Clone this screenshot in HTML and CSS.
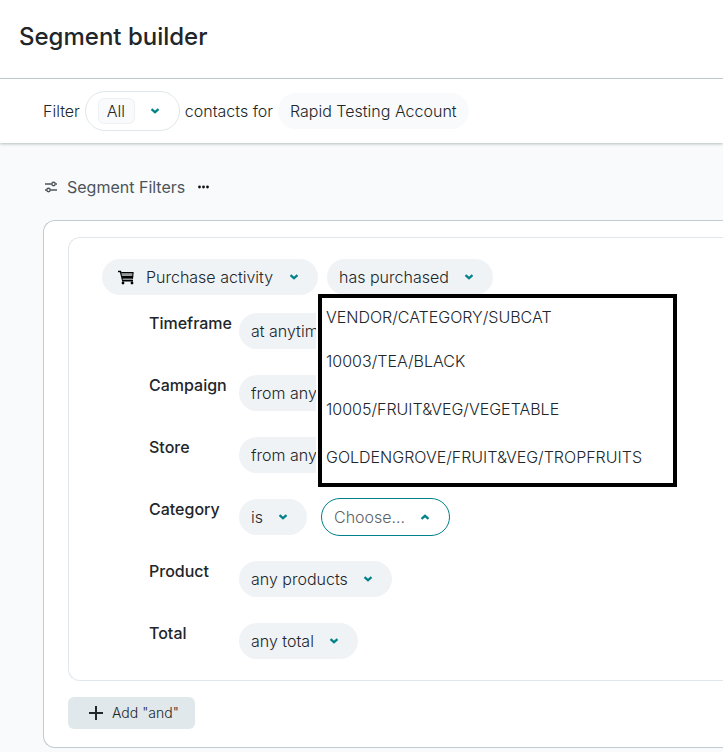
FILE: index.html
```html
<!DOCTYPE html>
<html lang="en">
<head>
<meta charset="utf-8">
<title>Segment builder</title>
<link rel="stylesheet" href="styles.css">
</head>
<body>
<svg class="sprite" aria-hidden="true">
  <symbol id="chevron" viewBox="0 0 10 6"><path d="M1.500 1.200 5 4.200 8.500 1.200" fill="none" stroke="currentColor" stroke-width="2.200"/></symbol>
</svg>
<header class="page-header">
  <h1>Segment builder</h1>
</header>
<form class="filter-bar">
  <label for="match">Filter</label>
  <span class="pill pill-outline">
    <select id="match" class="tag"><option>All</option></select>
    <svg class="chevron"><use href="#chevron"/></svg>
  </span>
  <span>contacts for</span>
  <span class="account">Rapid Testing Account</span>
</form>
<main>
  <div class="toolbar">
    <svg class="icon-sliders" viewBox="0 0 14 12" fill="none" stroke="currentColor" stroke-width="1.400"><path d="M1 3h6.500M11.500 3H13M1 9h1.500M6.500 9H13"/><circle cx="9.500" cy="3" r="1.700"/><circle cx="4.500" cy="9" r="1.700"/></svg>
    <h2>Segment Filters</h2>
    <button type="button" class="more" aria-label="More options"><svg viewBox="0 0 12 4" fill="currentColor"><circle cx="2" cy="2" r="1.400"/><circle cx="6" cy="2" r="1.400"/><circle cx="10" cy="2" r="1.400"/></svg></button>
  </div>
  <section class="panel">
    <div class="card">
      <div class="condition">
        <span class="pill pill-icon">
          <svg class="icon-cart" viewBox="0 0 17 15"><path d="M0 1.500h2.500l2.300 9.300H15" fill="none" stroke="currentColor" stroke-width="1.500"/><path d="M3.200 2H15.500V3.500H3.600zM3.900 5.700H15.300L14.900 8.800H4.700z" fill="currentColor"/><path d="M3.600 4.600H15.300" stroke="#8f9598" stroke-width="2"/><path d="M4.600 9.400H14.800" stroke="#8f9598" stroke-width="1.200"/><path d="M15 2.600 14.500 8.800" stroke="currentColor" stroke-width="1"/><circle cx="5" cy="13" r="1.400" fill="currentColor"/><circle cx="14" cy="13" r="1.400" fill="currentColor"/></svg>
          <select aria-label="Condition"><option>Purchase activity</option></select>
          <svg class="chevron"><use href="#chevron"/></svg>
        </span>
        <span class="pill">
          <select aria-label="Operator"><option>has purchased</option></select>
          <svg class="chevron"><use href="#chevron"/></svg>
        </span>
      </div>
      <div class="fields">
        <div class="field">
          <label for="timeframe">Timeframe</label>
          <span class="pill"><select id="timeframe"><option>at anytime</option></select><svg class="chevron"><use href="#chevron"/></svg></span>
        </div>
        <div class="field">
          <label for="campaign">Campaign</label>
          <span class="pill"><select id="campaign"><option>from any campaign</option></select><svg class="chevron"><use href="#chevron"/></svg></span>
        </div>
        <div class="field">
          <label for="store">Store</label>
          <span class="pill"><select id="store"><option>from any store</option></select><svg class="chevron"><use href="#chevron"/></svg></span>
        </div>
        <div class="field">
          <label for="category">Category</label>
          <span class="pill"><select id="category"><option>is</option></select><svg class="chevron"><use href="#chevron"/></svg></span>
          <div class="picker">
            <button type="button" class="pill picker-button" aria-haspopup="listbox" aria-expanded="true">Choose...<svg class="chevron flipped"><use href="#chevron"/></svg></button>
            <ul class="menu" role="listbox" aria-label="Category">
              <li class="menu-heading" role="presentation">VENDOR/CATEGORY/SUBCAT</li>
              <li role="option">10003/TEA/BLACK</li>
              <li role="option">10005/FRUIT&amp;VEG/VEGETABLE</li>
              <li role="option">GOLDENGROVE/FRUIT&amp;VEG/TROPFRUITS</li>
            </ul>
          </div>
        </div>
        <div class="field">
          <label for="product">Product</label>
          <span class="pill"><select id="product"><option>any products</option></select><svg class="chevron"><use href="#chevron"/></svg></span>
        </div>
        <div class="field">
          <label for="total">Total</label>
          <span class="pill"><select id="total"><option>any total</option></select><svg class="chevron"><use href="#chevron"/></svg></span>
        </div>
      </div>
    </div>
    <button type="button" class="add"><svg viewBox="0 0 14 14"><path d="M7 0v14M0 7h14" stroke="currentColor" stroke-width="2"/></svg>Add "and"</button>
  </section>
</main>
</body>
</html>
```
FILE: styles.css
```css
* { box-sizing: border-box; }

body {
  margin: 0;
  background: #f9fafc;
  color: #21262a;
  font: 350 16px/24px Inter, "Liberation Sans", sans-serif;
  overflow-x: hidden;
}

.sprite { display: none; }

.page-header {
  padding: 21px 19px 25px;
  background: #fff;
  border-bottom: 1px solid #c1ccd2;
}

h1 {
  margin: 0;
  font-size: 24px;
  line-height: 32px;
  font-weight: 500;
}

.filter-bar {
  display: flex;
  align-items: center;
  gap: 5px;
  padding: 12px 43px;
  background: #fff;
  box-shadow: 0 1px 3px #b4bebb;
}

.pill {
  display: inline-flex;
  align-items: center;
  gap: 15px;
  height: 36px;
  padding: 0 19px 0 12px;
  border: 0;
  border-radius: 20px;
  background: #f0f3f6;
  color: inherit;
  font: inherit;
}

.pill-outline {
  height: 40px;
  border: 1px solid #dfe7ea;
  background: #fff;
}

select {
  appearance: none;
  margin: 0;
  padding: 0;
  border: 0;
  background: none;
  color: inherit;
  font: inherit;
}

.tag {
  height: 26px;
  padding: 0 8px;
  border: 1px solid #edf1f4;
  border-radius: 6px;
  background: #f9fafc;
}

.chevron {
  flex: none;
  width: 10px;
  height: 6px;
  color: #00828a;
}

.flipped { transform: rotate(180deg); }

.account {
  padding: 6px 12px;
  border-radius: 18px;
  background: #f9fafc;
}

main { padding: 32px 0 4px 43px; }

.toolbar {
  display: flex;
  align-items: center;
  padding-left: 1px;
  margin-bottom: 21px;
  color: #4c555a;
}

h2 {
  margin: 0 12px 0 9px;
  font-size: 16px;
  line-height: 24px;
  font-weight: 400;
}

.icon-sliders { width: 14px; height: 12px; }

.more {
  display: flex;
  padding: 0;
  border: 0;
  background: none;
  color: #111;
}

.more svg { width: 13px; height: 4px; }

.panel {
  padding: 16px 0 18px 24px;
  border: 1px solid #c1ccd2;
  border-right: 0;
  border-radius: 12px 0 0 12px;
  background: #fff;
}

.card {
  margin-bottom: 16px;
  padding: 21px 0 21px 33px;
  border: 1px solid #e0e7ea;
  border-right: 0;
  border-radius: 12px 0 0 12px;
}

.condition {
  display: flex;
  gap: 9px;
}

.pill-icon { padding-left: 16px; }

.icon-cart {
  width: 17px;
  height: 15px;
  margin-right: -4px;
  color: #000;
}

.fields {
  display: grid;
  gap: 26px;
  padding: 18px 0 0 47px;
}

.field {
  display: flex;
  align-items: center;
  height: 36px;
}

.field > label {
  align-self: flex-start;
  width: 90px;
  margin-top: -2px;
  font-weight: 500;
}

.picker {
  position: relative;
  margin-left: 14px;
}

.picker-button {
  height: 38px;
  border: 1px solid #00828a;
  background: #fff;
  color: #5b6469;
}

.menu {
  position: absolute;
  bottom: calc(100% + 11px);
  left: -3px;
  width: 359px;
  margin: 0;
  padding: 0 4px 2px;
  border: 4px solid #000;
  background: #fff;
  box-shadow: -2px 0 #fff;
  list-style: none;
}

.menu li { line-height: 48px; }
.menu .menu-heading { line-height: 39px; }

.add {
  display: flex;
  align-items: center;
  gap: 9px;
  height: 32px;
  padding: 0 16px 0 21px;
  border: 0;
  border-radius: 6px;
  background: #e1e8eb;
  color: inherit;
  font: inherit;
  font-size: 14px;
}

.add svg { width: 14px; height: 14px; }
```
